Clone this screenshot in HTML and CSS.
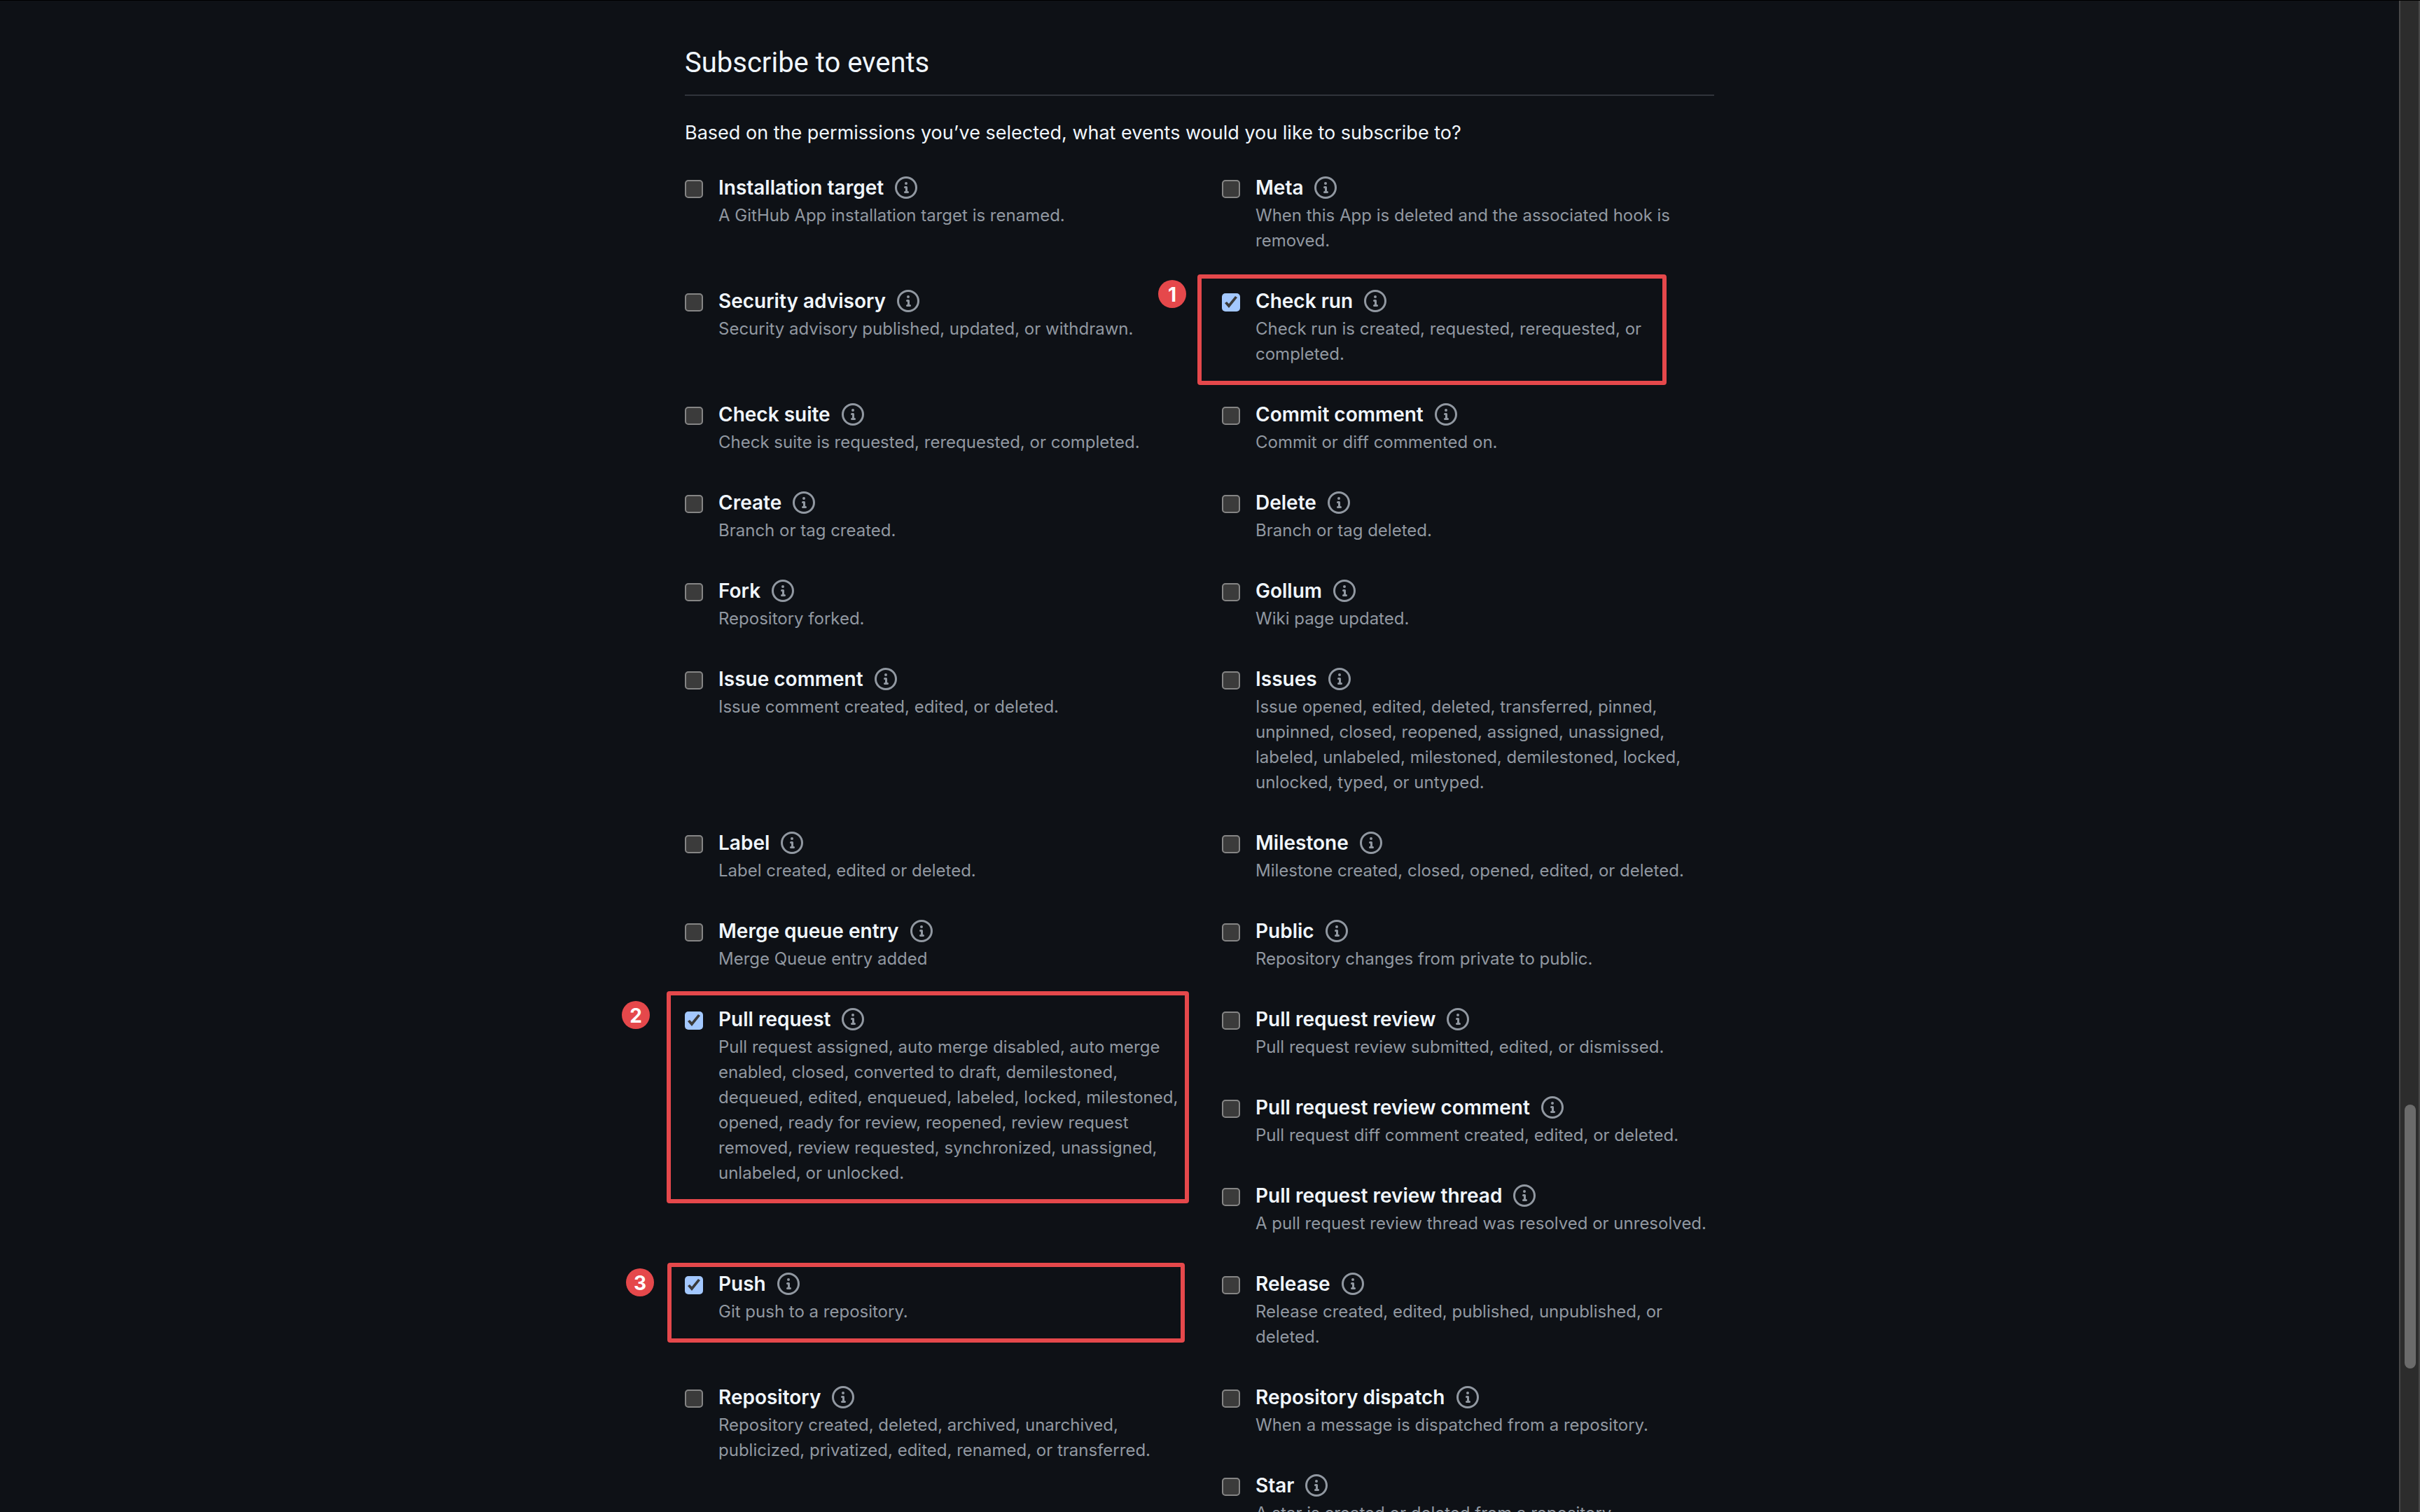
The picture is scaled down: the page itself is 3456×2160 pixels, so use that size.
FILE: index.html
```html
<!DOCTYPE html>
<html lang="en">
<head>
<meta charset="utf-8">
<title>Subscribe to events</title>
<link rel="stylesheet" href="styles.css">
</head>
<body>
<svg class="sprite" aria-hidden="true">
  <symbol id="info" viewBox="0 0 16 16"><path d="M0 8a8 8 0 1 1 16 0A8 8 0 0 1 0 8Zm8-6.5a6.5 6.5 0 1 0 0 13 6.5 6.5 0 0 0 0-13ZM6.5 7.75A.75.75 0 0 1 7.25 7h1a.75.75 0 0 1 .75.75v2.75h.25a.75.75 0 0 1 0 1.5h-2a.75.75 0 0 1 0-1.5h.25v-2h-.25a.75.75 0 0 1-.75-.75ZM8 6a1 1 0 1 1 0-2 1 1 0 0 1 0 2Z"/></symbol>
</svg>
<div class="window">
<main class="page">
<form class="content">
<h2 class="title">Subscribe to events</h2>
<p class="question">Based on the permissions you’ve selected, what events would you like to subscribe to?</p>
<div class="events">
  <div class="event"><input class="box" type="checkbox" id="e1"><div class="text"><div class="head"><label for="e1">Installation target</label><a class="info" href="#" aria-label="About installation target"><svg><use href="#info"/></svg></a></div><p class="note">A GitHub App installation target is renamed.</p></div></div>
  <div class="event"><input class="box" type="checkbox" id="e2"><div class="text"><div class="head"><label for="e2">Meta</label><a class="info" href="#" aria-label="About meta"><svg><use href="#info"/></svg></a></div><p class="note">When this App is deleted and the associated hook is removed.</p></div></div>
  <div class="event"><input class="box" type="checkbox" id="e3"><div class="text"><div class="head"><label for="e3">Security advisory</label><a class="info" href="#" aria-label="About security advisory"><svg><use href="#info"/></svg></a></div><p class="note">Security advisory published, updated, or withdrawn.</p></div></div>
  <div class="event"><div class="mark mark-run"><span class="badge">1</span></div><input class="box" type="checkbox" id="e4" checked><div class="text"><div class="head"><label for="e4">Check run</label><a class="info" href="#" aria-label="About check run"><svg><use href="#info"/></svg></a></div><p class="note">Check run is created, requested, rerequested, or<br>completed.</p></div></div>
  <div class="event"><input class="box" type="checkbox" id="e5"><div class="text"><div class="head"><label for="e5">Check suite</label><a class="info" href="#" aria-label="About check suite"><svg><use href="#info"/></svg></a></div><p class="note">Check suite is requested, rerequested, or completed.</p></div></div>
  <div class="event"><input class="box" type="checkbox" id="e6"><div class="text"><div class="head"><label for="e6">Commit comment</label><a class="info" href="#" aria-label="About commit comment"><svg><use href="#info"/></svg></a></div><p class="note">Commit or diff commented on.</p></div></div>
  <div class="event"><input class="box" type="checkbox" id="e7"><div class="text"><div class="head"><label for="e7">Create</label><a class="info" href="#" aria-label="About create"><svg><use href="#info"/></svg></a></div><p class="note">Branch or tag created.</p></div></div>
  <div class="event"><input class="box" type="checkbox" id="e8"><div class="text"><div class="head"><label for="e8">Delete</label><a class="info" href="#" aria-label="About delete"><svg><use href="#info"/></svg></a></div><p class="note">Branch or tag deleted.</p></div></div>
  <div class="event"><input class="box" type="checkbox" id="e9"><div class="text"><div class="head"><label for="e9">Fork</label><a class="info" href="#" aria-label="About fork"><svg><use href="#info"/></svg></a></div><p class="note">Repository forked.</p></div></div>
  <div class="event"><input class="box" type="checkbox" id="e10"><div class="text"><div class="head"><label for="e10">Gollum</label><a class="info" href="#" aria-label="About gollum"><svg><use href="#info"/></svg></a></div><p class="note">Wiki page updated.</p></div></div>
  <div class="event"><input class="box" type="checkbox" id="e11"><div class="text"><div class="head"><label for="e11">Issue comment</label><a class="info" href="#" aria-label="About issue comment"><svg><use href="#info"/></svg></a></div><p class="note">Issue comment created, edited, or deleted.</p></div></div>
  <div class="event"><input class="box" type="checkbox" id="e12"><div class="text"><div class="head"><label for="e12">Issues</label><a class="info" href="#" aria-label="About issues"><svg><use href="#info"/></svg></a></div><p class="note">Issue opened, edited, deleted, transferred, pinned, unpinned, closed, reopened, assigned, unassigned, labeled, unlabeled, milestoned, demilestoned, locked, unlocked, typed, or untyped.</p></div></div>
  <div class="event"><input class="box" type="checkbox" id="e13"><div class="text"><div class="head"><label for="e13">Label</label><a class="info" href="#" aria-label="About label"><svg><use href="#info"/></svg></a></div><p class="note">Label created, edited or deleted.</p></div></div>
  <div class="event"><input class="box" type="checkbox" id="e14"><div class="text"><div class="head"><label for="e14">Milestone</label><a class="info" href="#" aria-label="About milestone"><svg><use href="#info"/></svg></a></div><p class="note">Milestone created, closed, opened, edited, or deleted.</p></div></div>
  <div class="event"><input class="box" type="checkbox" id="e15"><div class="text"><div class="head"><label for="e15">Merge queue entry</label><a class="info" href="#" aria-label="About merge queue entry"><svg><use href="#info"/></svg></a></div><p class="note">Merge Queue entry added</p></div></div>
  <div class="event"><input class="box" type="checkbox" id="e16"><div class="text"><div class="head"><label for="e16">Public</label><a class="info" href="#" aria-label="About public"><svg><use href="#info"/></svg></a></div><p class="note">Repository changes from private to public.</p></div></div>
  <div class="event tall"><div class="mark mark-pull"><span class="badge">2</span></div><input class="box" type="checkbox" id="e17" checked><div class="text"><div class="head"><label for="e17">Pull request</label><a class="info" href="#" aria-label="About pull request"><svg><use href="#info"/></svg></a></div><p class="note">Pull request assigned, auto merge disabled, auto merge enabled, closed, converted to draft, demilestoned, dequeued, edited, enqueued, labeled, locked, milestoned, opened, ready for review, reopened, review request removed, review requested, synchronized, unassigned, unlabeled, or unlocked.</p></div></div>
  <div class="event"><input class="box" type="checkbox" id="e18"><div class="text"><div class="head"><label for="e18">Pull request review</label><a class="info" href="#" aria-label="About pull request review"><svg><use href="#info"/></svg></a></div><p class="note">Pull request review submitted, edited, or dismissed.</p></div></div>
  <div class="event"><input class="box" type="checkbox" id="e19"><div class="text"><div class="head"><label for="e19">Pull request review comment</label><a class="info" href="#" aria-label="About pull request review comment"><svg><use href="#info"/></svg></a></div><p class="note">Pull request diff comment created, edited, or deleted.</p></div></div>
  <div class="event"><input class="box" type="checkbox" id="e20"><div class="text"><div class="head"><label for="e20">Pull request review thread</label><a class="info" href="#" aria-label="About pull request review thread"><svg><use href="#info"/></svg></a></div><p class="note">A pull request review thread was resolved or unresolved.</p></div></div>
  <div class="event"><div class="mark mark-push"><span class="badge">3</span></div><input class="box" type="checkbox" id="e21" checked><div class="text"><div class="head"><label for="e21">Push</label><a class="info" href="#" aria-label="About push"><svg><use href="#info"/></svg></a></div><p class="note">Git push to a repository.</p></div></div>
  <div class="event"><input class="box" type="checkbox" id="e22"><div class="text"><div class="head"><label for="e22">Release</label><a class="info" href="#" aria-label="About release"><svg><use href="#info"/></svg></a></div><p class="note">Release created, edited, published, unpublished, or deleted.</p></div></div>
  <div class="event pair"><input class="box" type="checkbox" id="e23"><div class="text"><div class="head"><label for="e23">Repository</label><a class="info" href="#" aria-label="About repository"><svg><use href="#info"/></svg></a></div><p class="note">Repository created, deleted, archived, unarchived, publicized, privatized, edited, renamed, or transferred.</p></div></div>
  <div class="event"><input class="box" type="checkbox" id="e24"><div class="text"><div class="head"><label for="e24">Repository dispatch</label><a class="info" href="#" aria-label="About repository dispatch"><svg><use href="#info"/></svg></a></div><p class="note">When a message is dispatched from a repository.</p></div></div>
  <div class="event"><input class="box" type="checkbox" id="e25"><div class="text"><div class="head"><label for="e25">Star</label><a class="info" href="#" aria-label="About star"><svg><use href="#info"/></svg></a></div><p class="note">A star is created or deleted from a repository.</p></div></div>
</div>
</form>
</main>
<div class="track" aria-hidden="true"><div class="thumb"></div></div>
</div>
</body>
</html>
```
FILE: styles.css
```css
* { box-sizing: border-box; }

body {
  margin: 0;
  background: #0e1116;
  color: #f0f6fc;
  font-family: Inter, "Liberation Sans", sans-serif;
  font-size: 28px;
  line-height: 42px;
}

.sprite { display: none; }

.window {
  display: flex;
  height: 100vh;
  border-top: 1px solid #000;
}

.page {
  flex: 1;
  min-width: 0;
  overflow: hidden;
  padding: 58px 32px 0;
}

.content {
  max-width: 1470px;
  margin: 0 auto;
}

.title {
  margin: 0 0 32px;
  padding-bottom: 14px;
  border-bottom: 2px solid #30343b;
  font-family: Roboto, Inter, sans-serif;
  font-size: 40px;
  font-weight: 400;
  line-height: 62px;
}

.question {
  margin: 0 0 36px;
  font-size: 27px;
}

.events {
  display: grid;
  grid-template-columns: 719px minmax(0, 1fr);
  column-gap: 48px;
}

.event {
  position: relative;
  display: flex;
  align-items: flex-start;
  gap: 22px;
  padding-bottom: 47px;
}

.tall { grid-row: span 3; }
.pair { grid-row: span 2; }

.box {
  appearance: none;
  flex: none;
  width: 26px;
  height: 26px;
  margin: 10px 0 0;
  border: 2px solid #858585;
  border-radius: 5px;
  background: #3b3b3b;
}

.box:checked {
  border: 0;
  background: #a3c8ff;
}

.box:checked::after {
  content: "";
  display: block;
  width: 26px;
  height: 26px;
  background: #3b3b3b;
  clip-path: polygon(4px 14px, 7px 12px, 10px 15px, 19px 4px, 22px 6px, 10px 21px);
}

.text { min-width: 0; }

.head {
  display: flex;
  align-items: center;
  gap: 16px;
  font-weight: 600;
}

.info {
  display: flex;
  color: #9198a1;
}

.info svg {
  width: 32px;
  height: 32px;
  fill: currentColor;
}

.note {
  margin: 1px 0 0;
  color: #9198a1;
  font-size: 24px;
  line-height: 36px;
}

/* Red call-outs laid over the chosen events */
.mark {
  position: absolute;
  border: 6px solid #e5484b;
  border-radius: 4px;
}

.mark-run { inset: -17px 68px 21px -35px; }
.mark-pull { inset: -19px -1px 94px -26px; }
.mark-push { inset: -9px 5px 57px -25px; }

.badge {
  position: absolute;
  top: 2px;
  left: -62px;
  display: grid;
  place-items: center;
  width: 40px;
  height: 40px;
  border-radius: 50%;
  background: #e5484b;
  color: #fff;
  font-size: 28px;
  font-weight: 700;
}

.mark-pull .badge { top: 8px; left: -70px; }
.mark-push .badge { left: -65px; }

.track {
  display: flex;
  flex-direction: column;
  flex: none;
  width: 30px;
  padding: 0 4px 0 6px;
  border: solid #484848;
  border-width: 0 2px;
  background: #2c2c2c;
}

.thumb {
  height: 377px;
  margin-top: auto;
  margin-bottom: 205px;
  border-radius: 8px;
  background: #6b6b6b;
}
```
